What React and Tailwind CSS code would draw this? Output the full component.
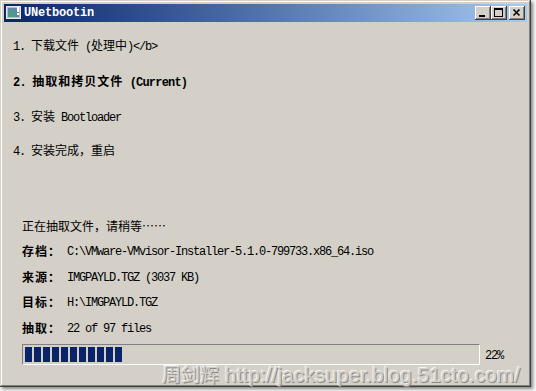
import React from 'react';

const CJK_RUN = /[\u2026\u3000-\u9fff\uff00-\uffef]+|[^\u2026\u3000-\u9fff\uff00-\uffef]+/g;
const IS_CJK = /[\u2026\u3000-\u9fff\uff00-\uffef]/;

// SimSun-like mixed text: 12px CJK, 6px-wide latin
const Mixed = ({ text, bold }) => {
  const parts = text.match(CJK_RUN) || [];
  return parts.map((p, i) => {
    if (IS_CJK.test(p)) {
      return (
        <span
          key={i}
          className={
            bold
              ? "font-['Noto_Sans_CJK_SC',sans-serif] text-[12px] font-bold tracking-[1px]"
              : "font-['Noto_Sans_CJK_SC',sans-serif] text-[12px]"
          }
        >
          {p}
        </span>
      );
    }
    return (
      <span
        key={i}
        className={
          bold
            ? "font-['Liberation_Mono',monospace] text-[12px] font-bold tracking-[-0.8px] whitespace-pre"
            : "font-['Liberation_Mono',monospace] text-[12px] tracking-[-1.2px] whitespace-pre"
        }
      >
        {p}
      </span>
    );
  });
};

const TitleButton = ({ children, className = '' }) => (
  <div
    className={`w-[16px] h-[14px] bg-[#d4d0c8] shadow-[inset_-1px_-1px_#404040,inset_1px_1px_#ffffff,inset_-2px_-2px_#808080] ${className}`}
  >
    <svg width="16" height="14" viewBox="0 0 16 14">{children}</svg>
  </div>
);

const steps = [
  { text: '1. 下载文件 (处理中)</b>', h: 'h-[36px]' },
  { text: '2. 抽取和拷贝文件 (Current)', h: 'h-[36px]', bold: true },
  { text: '3. 安装 Bootloader', h: 'h-[34px]' },
  { text: '4. 安装完成，重启', h: 'h-[34px]' },
];

const details = [
  { label: '存档：', value: 'C:\\VMware-VMvisor-Installer-5.1.0-799733.x86_64.iso', h: 'h-[25px]' },
  { label: '来源：', value: 'IMGPAYLD.TGZ (3037 KB)', h: 'h-[26px]' },
  { label: '目标：', value: 'H:\\IMGPAYLD.TGZ', h: 'h-[25px]' },
  { label: '抽取：', value: '22 of 97 files', h: 'h-[26px]' },
];

const App = () => {
  return (
    <div className="w-[536px] h-[391px] bg-[#f6f6f6] relative overflow-hidden">
      <div className="w-[531px] h-[387px] bg-[#d4d0c8] p-[4px] flex flex-col text-black shadow-[inset_-1px_-1px_#404040,inset_1px_1px_#d4d0c8,inset_-2px_-2px_#808080,inset_2px_2px_#ffffff,2px_2px_3px_rgba(0,0,0,0.45)]">
        {/* title bar */}
        <div className="h-[18px] flex items-center bg-linear-to-r from-[#0a246a] to-[#a6caf0] pl-[2px] pr-[2px]">
          <svg width="16" height="14" viewBox="0 0 16 14" className="shrink-0">
            <rect x="0.5" y="0.5" width="14" height="12" fill="#b8bcc4" stroke="#e8eaee" />
            <rect x="2" y="2" width="11" height="9" fill="#5a8aa8" />
            <rect x="2" y="5" width="7" height="6" fill="#4f9a8a" />
            <rect x="11" y="1" width="2" height="5" fill="#ffffff" />
            <rect x="11" y="7" width="2" height="2" fill="#ffffff" />
          </svg>
          <span className="ml-[2px] font-['Liberation_Mono',monospace] text-[12px] font-bold tracking-[-0.2px] text-white leading-none">
            UNetbootin
          </span>
          <div className="ml-auto flex items-center">
            <TitleButton>
              <rect x="4" y="9" width="6" height="2" fill="#000" />
            </TitleButton>
            <TitleButton>
              <rect x="3.5" y="2.5" width="8" height="8" fill="none" stroke="#000" />
              <rect x="3" y="2" width="9" height="2" fill="#000" />
            </TitleButton>
            <TitleButton className="ml-[2px]">
              <path d="M4.5 3.5 L10.5 9.5 M10.5 3.5 L4.5 9.5" stroke="#000" strokeWidth="1.6" />
            </TitleButton>
          </div>
        </div>

        {/* steps */}
        <div className="pt-[5px] pl-[9px] flex flex-col">
          {steps.map((s) => (
            <div key={s.text} className={`${s.h} flex items-center leading-[14px]`}>
              <div>
                <Mixed text={s.text} bold={s.bold} />
              </div>
            </div>
          ))}
        </div>

        {/* status */}
        <div className="mt-[45px] pl-[18px] flex flex-col">
          <div className="h-[26px] flex items-center leading-[14px]">
            <div>
              <Mixed text="正在抽取文件，请稍等……" />
            </div>
          </div>
          {details.map((d) => (
            <div key={d.label} className={`${d.h} flex items-center leading-[14px]`}>
              <div className="w-[45px] shrink-0">
                <Mixed text={d.label} bold />
              </div>
              <div>
                <Mixed text={d.value} />
              </div>
            </div>
          ))}
        </div>

        {/* progress */}
        <div className="mt-[4px] pl-[18px] flex items-center">
          <div className="w-[458px] h-[21px] border border-t-[#808080] border-l-[#808080] border-b-white border-r-white p-[2px] flex gap-[2px]">
            {Array.from({ length: 11 }).map((_, i) => (
              <div key={i} className="w-[7px] h-[15px] bg-[#0a246a]" />
            ))}
          </div>
          <div className="ml-[5px] leading-[14px]">
            <Mixed text="22%" />
          </div>
        </div>
      </div>

      {/* watermark */}
      <div className="absolute left-[162px] top-[362px] leading-[24px] whitespace-nowrap text-[#d2cfc9] [text-shadow:1px_1px_0_#8e8b85,-1px_-1px_0_#f4f3f0]">
        <span className="font-['Noto_Sans_CJK_SC',sans-serif] text-[19px]">周剑辉</span>
        <span className="font-['Liberation_Sans',sans-serif] text-[21px]"> http://jacksuper.blog.51cto.com/</span>
      </div>
    </div>
  );
};

export default App;
